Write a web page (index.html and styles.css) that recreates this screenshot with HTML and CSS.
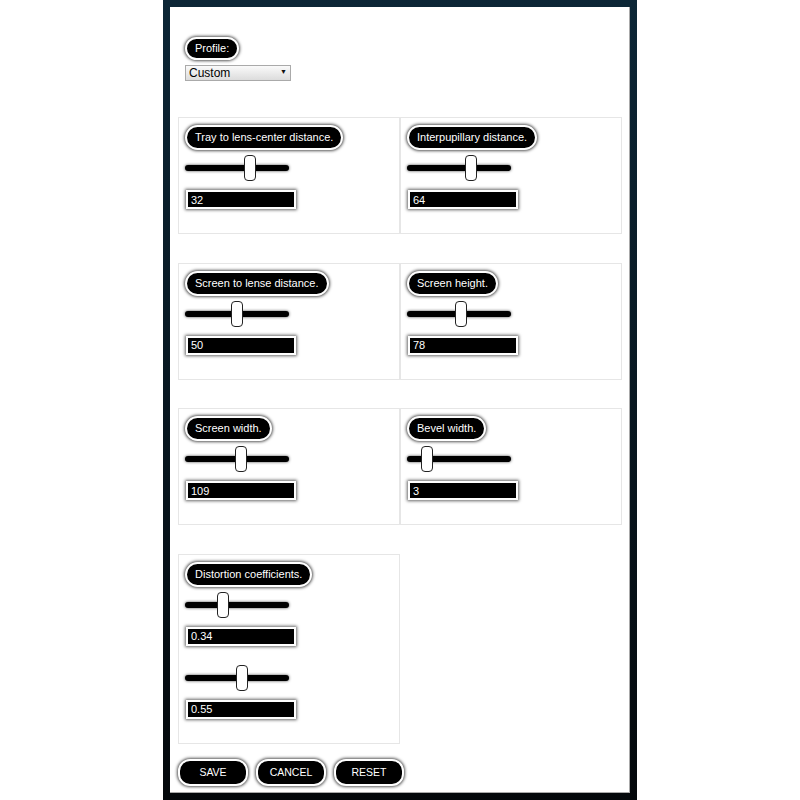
FILE: index.html
```html
<!DOCTYPE html>
<html lang="en">
  <head>
    <meta charset="UTF-8" />
    <title>Lens Settings</title>
    <link rel="stylesheet" href="styles.css">
  </head>
  <body>
    <div class="frame">
      <div class="sheet">
        <!-- Profile picker -->
        <div class="profile">
          <span class="tag tag-small">Profile:</span>
          <div class="select-wrap">
            <select class="select">
              <option>Custom</option>
            </select>
          </div>
        </div>

        <!-- Settings grid -->
        <div class="grid">
          <div class="cell">
            <span class="tag">Tray to lens-center distance.</span>
            <input class="slider" type="range" min="0" max="50" value="32">
            <input class="num" type="text" value="32">
          </div>
          <div class="cell">
            <span class="tag">Interpupillary distance.</span>
            <input class="slider" type="range" min="0" max="100" value="63">
            <input class="num" type="text" value="64">
          </div>

          <div class="cell">
            <span class="tag">Screen to lense distance.</span>
            <input class="slider" type="range" min="0" max="100" value="50">
            <input class="num" type="text" value="50">
          </div>
          <div class="cell">
            <span class="tag">Screen height.</span>
            <input class="slider" type="range" min="0" max="150" value="78">
            <input class="num" type="text" value="78">
          </div>

          <div class="cell">
            <span class="tag">Screen width.</span>
            <input class="slider" type="range" min="0" max="200" value="109">
            <input class="num" type="text" value="109">
          </div>
          <div class="cell">
            <span class="tag">Bevel width.</span>
            <input class="slider" type="range" min="0" max="20" value="3">
            <input class="num" type="text" value="3">
          </div>

          <div class="cell">
            <span class="tag">Distortion coefficients.</span>
            <input class="slider" type="range" min="0" max="1" step="0.01" value="0.35">
            <input class="num" type="text" value="0.34">
            <input class="slider slider-next" type="range" min="0" max="1" step="0.01" value="0.55">
            <input class="num" type="text" value="0.55">
          </div>
        </div>

        <!-- Actions -->
        <div class="actions">
          <button class="btn">Save</button>
          <button class="btn">Cancel</button>
          <button class="btn">Reset</button>
        </div>
      </div>
    </div>
  </body>
</html>
```

FILE: styles.css
```css
* {
  box-sizing: border-box;
}

body {
  margin: 0;
  background: #fff;
  font-family: "Liberation Sans", Arial, sans-serif;
}

/* Dark outer frame */
.frame {
  width: 474px;
  height: 800px;
  margin: 0 auto;
  padding: 7px;
  background: linear-gradient(#0c2636, #04080b);
}

.sheet {
  height: 100%;
  padding: 30px 8px 8px;
  background: #fff;
  box-shadow: inset -1px -1px 0 #aaa;
}

/* Pill labels */
.tag {
  align-self: flex-start;
  display: inline-block;
  padding: 4px 8px;
  font-size: 11px;
  line-height: 13px;
  color: #fff;
  background: #000;
  border: 2px solid #fff;
  border-radius: 13px;
  box-shadow: 0 0 3px 1px #555;
  white-space: nowrap;
}

.tag-small {
  padding: 3px 8px;
}

/* Profile */
.profile {
  display: flex;
  flex-direction: column;
  padding-left: 7px;
}

.select-wrap {
  position: relative;
  width: 106px;
  margin-top: 5px;
}

.select-wrap::after {
  content: "\25BC";
  position: absolute;
  right: 4px;
  top: 3px;
  font-size: 7px;
  color: #111;
  pointer-events: none;
}

.select {
  -webkit-appearance: none;
  appearance: none;
  display: block;
  width: 106px;
  height: 16px;
  margin: 0;
  padding: 0 3px;
  font: 12px/14px "Liberation Sans", Arial, sans-serif;
  color: #000;
  background: linear-gradient(#fafafa, #dcdcdc);
  border: 1px solid #aaa;
  border-radius: 0;
}

/* Settings grid */
.grid {
  display: grid;
  grid-template-columns: 222px 222px;
  row-gap: 28.5px;
  margin-top: 36px;
}

.cell {
  display: flex;
  flex-direction: column;
  padding: 7px 6px 24px;
  border: 1px solid #e6e6e6;
}

/* Range sliders */
.slider {
  -webkit-appearance: none;
  appearance: none;
  display: block;
  width: 104px;
  height: 26px;
  margin: 5px 0 0;
  background: transparent;
}

.slider::-webkit-slider-runnable-track {
  height: 6px;
  background: #000;
  border-radius: 3px;
  box-shadow: 0 0 3px #444;
}

.slider::-webkit-slider-thumb {
  -webkit-appearance: none;
  width: 12px;
  height: 26px;
  margin-top: -10px;
  background: #fff;
  border: 1px solid #222;
  border-radius: 4px;
}

.slider-next {
  margin-top: 19px;
}

/* Number fields */
.num {
  display: block;
  width: 110px;
  height: 19px;
  margin: 9px 0 0 1px;
  padding: 0 3px;
  font: 11px/15px "Liberation Sans", Arial, sans-serif;
  color: #fff;
  background: #000;
  border: 2px solid #fff;
  box-shadow: 0 0 3px 1px #666;
  outline: none;
}

/* Buttons */
.actions {
  display: flex;
  gap: 8px;
  margin-top: 15px;
}

.btn {
  width: 70px;
  height: 27px;
  padding: 0;
  font: 10.5px "Liberation Sans", Arial, sans-serif;
  text-transform: uppercase;
  color: #fff;
  background: #000;
  border: 2px solid #fff;
  border-radius: 12px;
  box-shadow: 0 0 3px 1px #555;
}
```
